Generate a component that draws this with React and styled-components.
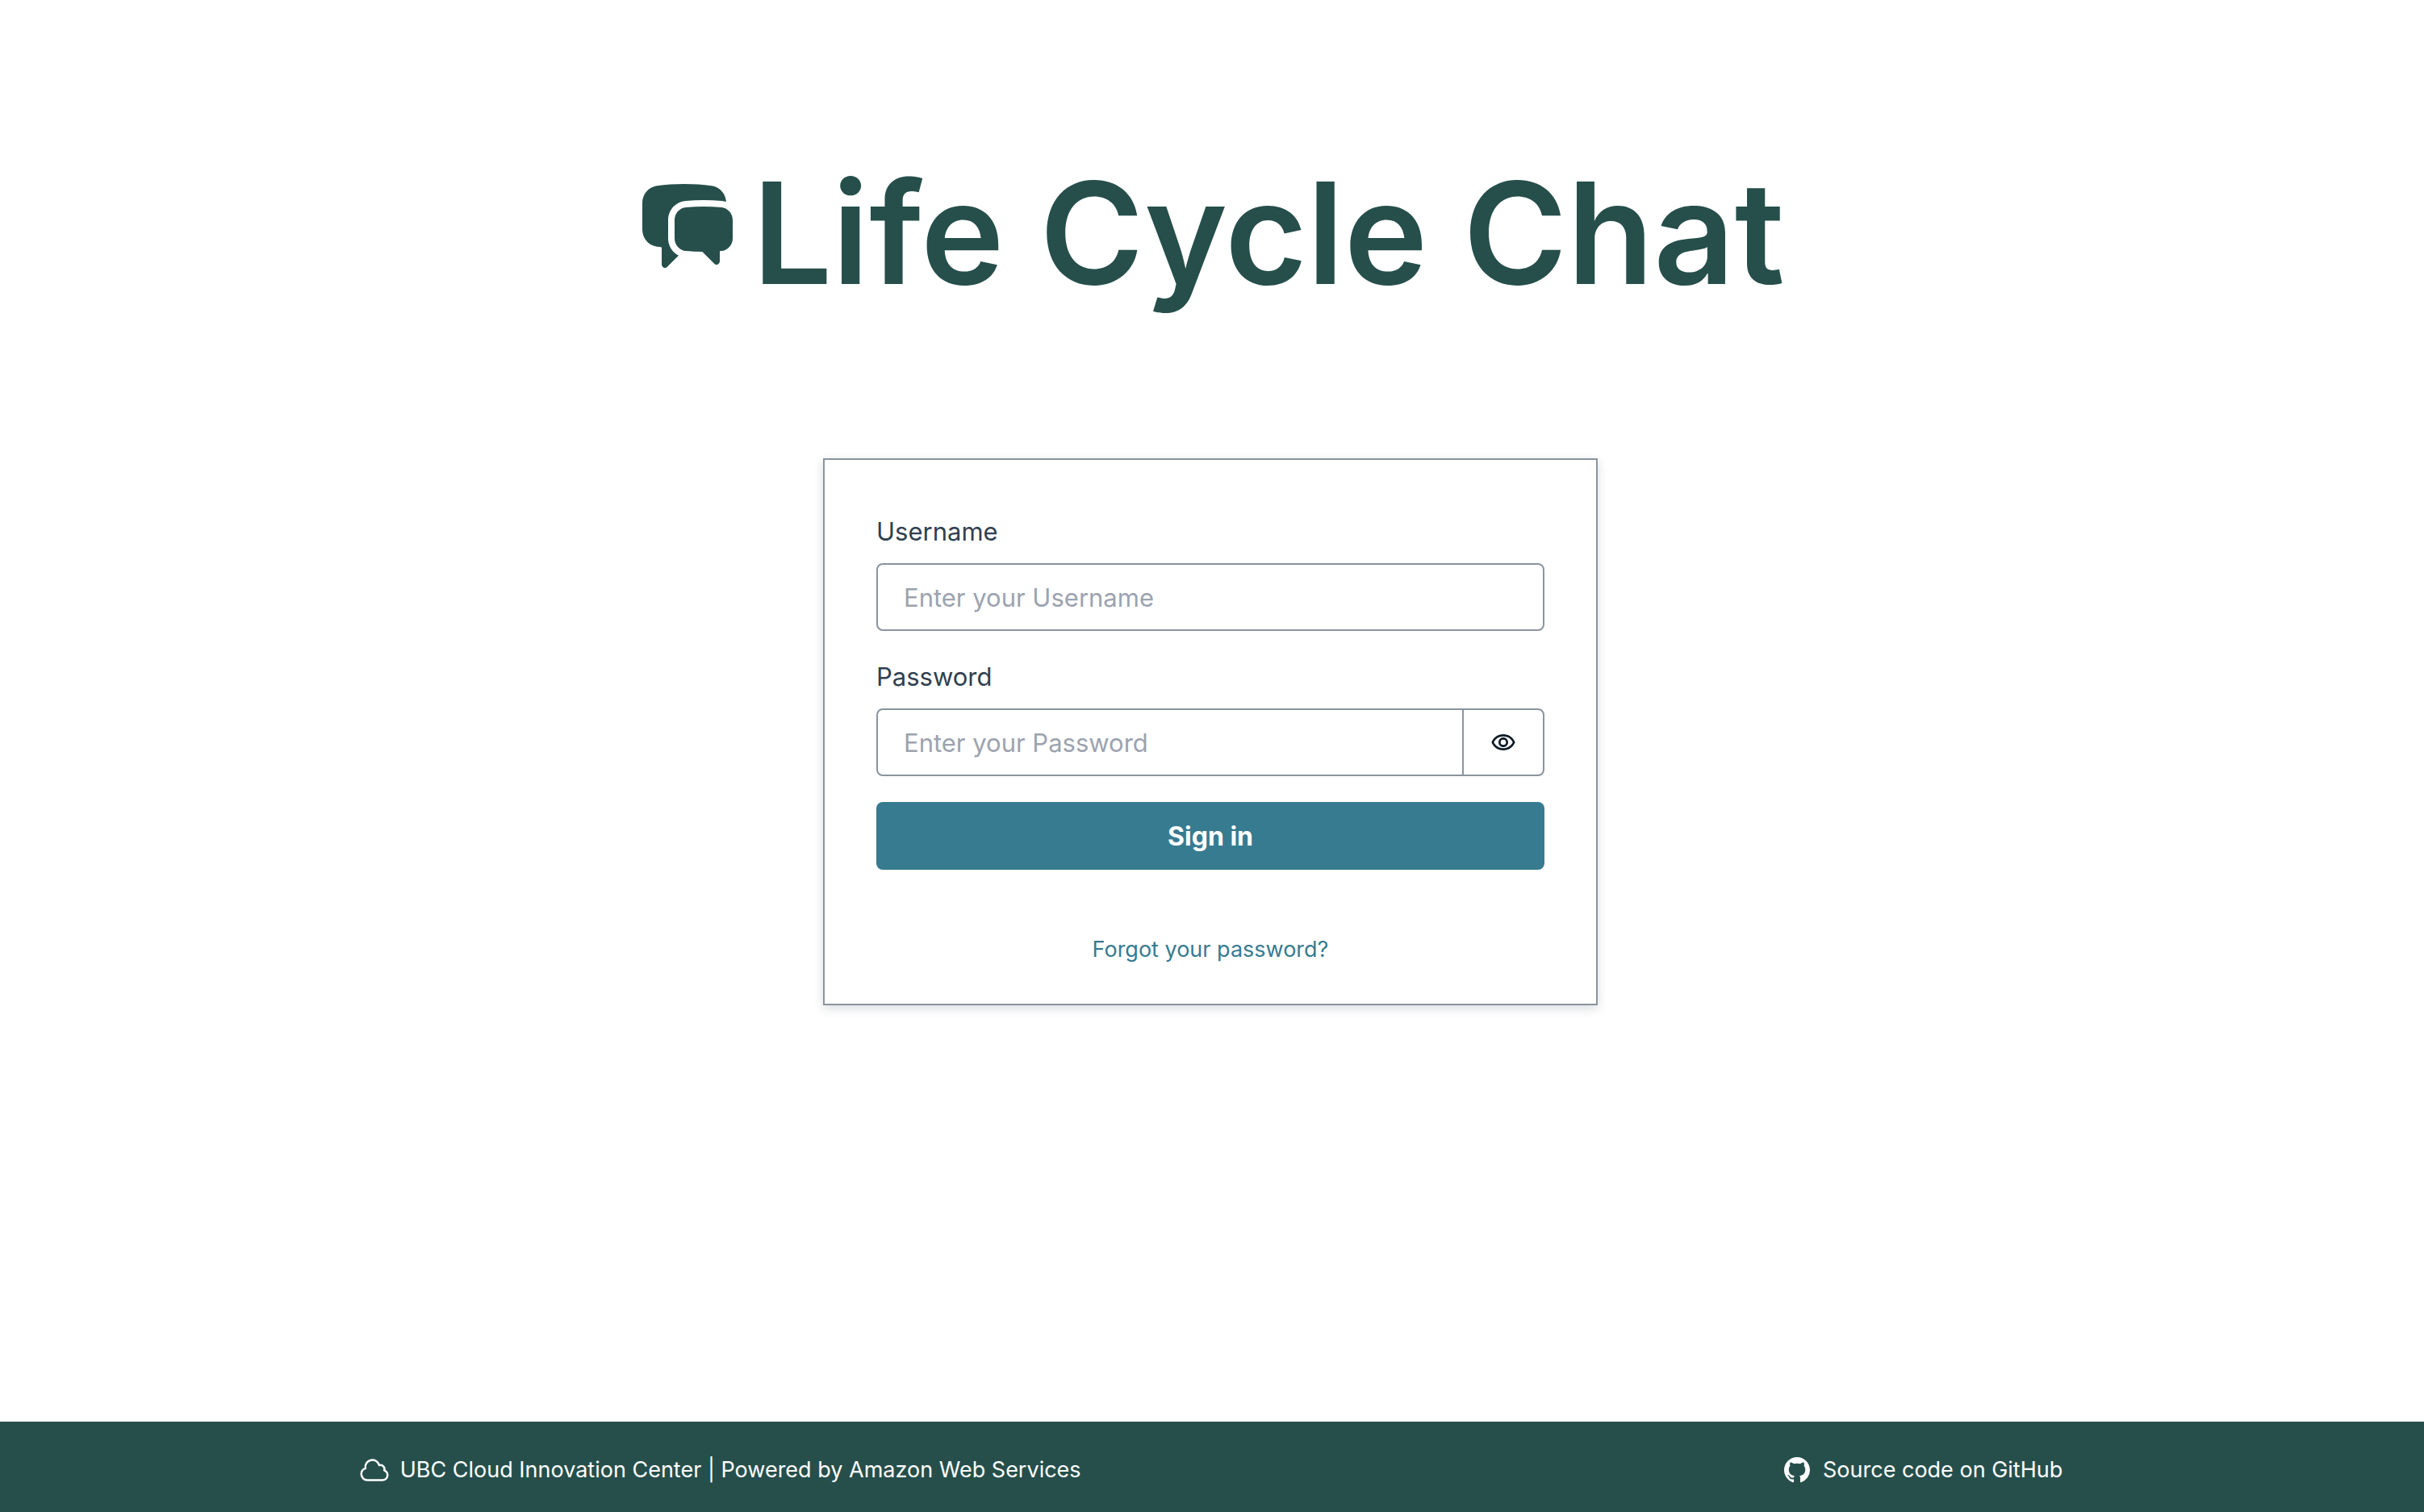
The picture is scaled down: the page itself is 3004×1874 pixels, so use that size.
import React, { useState } from "react";
import styled, { createGlobalStyle } from "styled-components";
import { HiChatBubbleLeftRight, HiOutlineCloud } from "react-icons/hi2";
import { MdOutlineRemoveRedEye } from "react-icons/md";

const GlobalStyle = createGlobalStyle`
  *, *::before, *::after { box-sizing: border-box; }
  body {
    margin: 0;
    background: #ffffff;
    color: #304050;
    font-family: Inter, "Liberation Sans", sans-serif;
    font-size: 31px;
    line-height: 50px;
  }
`;

const Page = styled.div`
  min-height: 100vh;
  display: flex;
  flex-direction: column;
`;

const Main = styled.main`
  flex: 1;
  display: flex;
  flex-direction: column;
  align-items: center;
  gap: 184px;
  padding: 192px 36px 64px 32px;
`;

const Brand = styled.header`
  display: flex;
  align-items: flex-start;
  gap: 16px;
  color: #264f4b;

  svg {
    width: 128px;
    height: 128px;
    margin-top: 24px;
  }
`;

const Title = styled.h1`
  margin: 0;
  font-size: 175px;
  font-weight: 600;
  line-height: 192px;
`;

const Card = styled.section`
  width: 100%;
  max-width: 960px;
  border: 2px solid #89949f;
  background: #ffffff;
  box-shadow: 0 4px 12px rgba(13, 26, 38, 0.15);
`;

const Form = styled.form`
  display: flex;
  flex-direction: column;
  gap: 32px;
  padding: 64px;
`;

const Field = styled.div`
  display: flex;
  flex-direction: column;
  gap: 14px;
`;

const Control = styled.div`
  display: flex;
  height: 84px;
  border: 2px solid #89949f;
  border-radius: 8px;
`;

const Input = styled.input`
  flex: 1;
  min-width: 0;
  border: 0;
  outline: 0;
  padding: 2px 32px 0;
  background: transparent;
  color: #0d1a26;
  font: inherit;

  &::placeholder {
    color: #9ca3af;
    opacity: 1;
  }
`;

const RevealButton = styled.button`
  display: flex;
  align-items: center;
  justify-content: center;
  width: 100px;
  border: 0;
  border-left: 2px solid #89949f;
  padding: 0;
  background: transparent;
  color: #0d1a26;
  cursor: pointer;

  svg {
    width: 32px;
    height: 32px;
  }
`;

const SubmitButton = styled.button`
  height: 84px;
  border: 0;
  border-radius: 8px;
  padding: 2px 32px 0;
  background: #377b91;
  color: #ffffff;
  font: inherit;
  font-size: 32px;
  font-weight: 700;
  cursor: pointer;
`;

const CardFooter = styled.div`
  display: flex;
  justify-content: center;
  padding-bottom: 32px;
`;

const LinkButton = styled.button`
  border: 0;
  padding: 14px 24px;
  background: transparent;
  color: #377b91;
  font: inherit;
  font-size: 27px;
  line-height: 42px;
  cursor: pointer;
`;

const Footer = styled.footer`
  display: flex;
  align-items: center;
  justify-content: space-around;
  height: 112px;
  padding: 8px 12px 0 8px;
  background: #264f4b;
  color: #ffffff;
`;

const FooterLink = styled.a`
  display: flex;
  align-items: center;
  gap: ${(p) => p.$gap}px;
  color: inherit;
  font-size: 27px;
  line-height: 42px;
  text-decoration: none;

  svg {
    width: ${(p) => p.$icon}px;
    height: ${(p) => p.$icon}px;
  }
`;

function GitHubMark() {
  return (
    <svg viewBox="0 0 16 16" fill="currentColor" aria-hidden="true">
      <path d="M8 0C3.58 0 0 3.58 0 8c0 3.54 2.29 6.53 5.47 7.59.4.07.55-.17.55-.38 0-.19-.01-.82-.01-1.49-2.01.37-2.53-.49-2.69-.94-.09-.23-.48-.94-.82-1.13-.28-.15-.68-.52-.01-.53.63-.01 1.08.58 1.23.82.72 1.21 1.87.87 2.33.66.07-.52.28-.87.51-1.07-1.78-.2-3.64-.89-3.64-3.95 0-.87.31-1.59.82-2.15-.08-.2-.36-1.02.08-2.12 0 0 .67-.21 2.2.82.64-.18 1.32-.27 2-.27s1.36.09 2 .27c1.53-1.04 2.2-.82 2.2-.82.44 1.1.16 1.92.08 2.12.51.56.82 1.27.82 2.15 0 3.07-1.87 3.75-3.65 3.95.29.25.54.73.54 1.48 0 1.07-.01 1.93-.01 2.2 0 .21.15.46.55.38A8.01 8.01 0 0 0 16 8c0-4.42-3.58-8-8-8z" />
    </svg>
  );
}

export default function App() {
  const [revealed, setRevealed] = useState(false);

  return (
    <Page>
      <GlobalStyle />
      <Main>
        <Brand>
          <HiChatBubbleLeftRight aria-hidden="true" />
          <Title>Life Cycle Chat</Title>
        </Brand>
        <Card>
          <Form onSubmit={(e) => e.preventDefault()}>
            <Field>
              <label htmlFor="username">Username</label>
              <Control>
                <Input id="username" name="username" autoComplete="username" placeholder="Enter your Username" />
              </Control>
            </Field>
            <Field>
              <label htmlFor="password">Password</label>
              <Control>
                <Input
                  id="password"
                  name="password"
                  type={revealed ? "text" : "password"}
                  autoComplete="current-password"
                  placeholder="Enter your Password"
                />
                <RevealButton type="button" aria-label="Show password" aria-pressed={revealed} onClick={() => setRevealed(!revealed)}>
                  <MdOutlineRemoveRedEye aria-hidden="true" />
                </RevealButton>
              </Control>
            </Field>
            <SubmitButton type="submit">Sign in</SubmitButton>
          </Form>
          <CardFooter>
            <LinkButton type="button">Forgot your password?</LinkButton>
          </CardFooter>
        </Card>
      </Main>
      <Footer>
        <FooterLink href="#cic" $icon={40} $gap={12}>
          <HiOutlineCloud aria-hidden="true" />
          UBC Cloud Innovation Center | Powered by Amazon Web Services
        </FooterLink>
        <FooterLink href="#source" $icon={32} $gap={16}>
          <GitHubMark />
          Source code on GitHub
        </FooterLink>
      </Footer>
    </Page>
  );
}
